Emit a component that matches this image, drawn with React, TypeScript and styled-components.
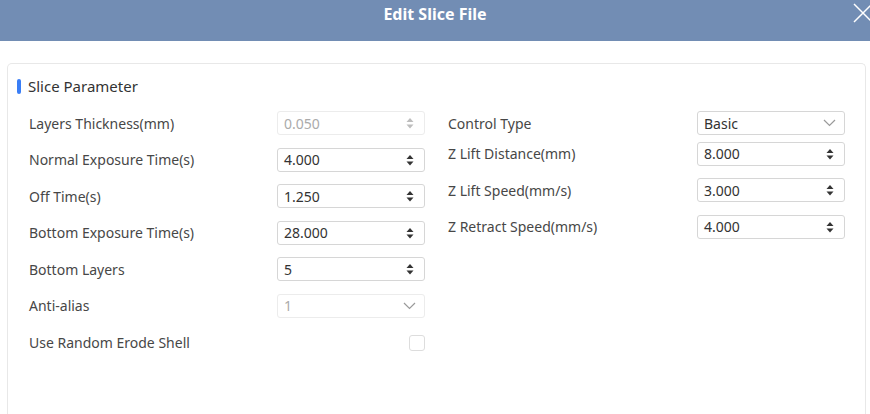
import React, { useState } from "react";
import styled, { createGlobalStyle } from "styled-components";

const GlobalStyle = createGlobalStyle`
  body {
    margin: 0;
    background: #ffffff;
    font-family: "Noto Sans", "Liberation Sans", sans-serif;
  }
`;

interface IField {
  label: string;
  kind: "number" | "select" | "check";
  value?: string;
  disabled?: boolean;
  tight?: boolean;
}

const leftFields: IField[] = [
  { label: "Layers Thickness(mm)", kind: "number", value: "0.050", disabled: true },
  { label: "Normal Exposure Time(s)", kind: "number", value: "4.000" },
  { label: "Off Time(s)", kind: "number", value: "1.250" },
  { label: "Bottom Exposure Time(s)", kind: "number", value: "28.000" },
  { label: "Bottom Layers", kind: "number", value: "5" },
  { label: "Anti-alias", kind: "select", value: "1", disabled: true },
  { label: "Use Random Erode Shell", kind: "check" },
];

const rightFields: IField[] = [
  { label: "Control Type", kind: "select", value: "Basic", tight: true },
  { label: "Z Lift Distance(mm)", kind: "number", value: "8.000" },
  { label: "Z Lift Speed(mm/s)", kind: "number", value: "3.000" },
  { label: "Z Retract Speed(mm/s)", kind: "number", value: "4.000" },
];

const Spinner = ({ disabled }: { disabled?: boolean }) => (
  <SpinBox>
    <svg width="8" height="16" viewBox="0 0 8 16">
      <path d="M4 3 L7.5 7 L0.5 7 Z" fill={disabled ? "#bdbdbd" : "#333"} />
      <path d="M0.5 9.5 L7.5 9.5 L4 13.5 Z" fill={disabled ? "#bdbdbd" : "#333"} />
    </svg>
  </SpinBox>
);

const Chevron = () => (
  <svg width="13" height="8" viewBox="0 0 13 8">
    <path d="M1 1 L6.5 6.5 L12 1" fill="none" stroke="#9a9a9a" strokeWidth="1.2" />
  </svg>
);

const FieldRow = ({ field }: { field: IField }) => {
  const [checked, setChecked] = useState(false);

  return (
    <Row $tight={field.tight}>
      <Label>{field.label}</Label>
      {field.kind === "number" && (
        <Box $disabled={field.disabled}>
          <Value $disabled={field.disabled}>{field.value}</Value>
          <Spinner disabled={field.disabled} />
        </Box>
      )}
      {field.kind === "select" && (
        <Box $disabled={field.disabled}>
          <Value $disabled={field.disabled}>{field.value}</Value>
          <Chevron />
        </Box>
      )}
      {field.kind === "check" && (
        <CheckWrap>
          <Check $checked={checked} onClick={() => setChecked(!checked)} />
        </CheckWrap>
      )}
    </Row>
  );
};

const App = () => {
  return (
    <>
      <GlobalStyle />
      <Page>
        <Header>
          <HeaderTitle>Edit Slice File</HeaderTitle>
          <Close aria-label="close">
            <svg width="22" height="22" viewBox="0 0 22 22">
              <path d="M2 2 L20 20 M20 2 L2 20" stroke="#ffffff" strokeWidth="1.5" />
            </svg>
          </Close>
        </Header>
        <Card>
          <SectionTitle>
            <Bar />
            Slice Parameter
          </SectionTitle>
          <Columns>
            <Column>
              {leftFields.map((f) => (
                <FieldRow key={f.label} field={f} />
              ))}
            </Column>
            <Column>
              {rightFields.map((f) => (
                <FieldRow key={f.label} field={f} />
              ))}
            </Column>
          </Columns>
        </Card>
      </Page>
    </>
  );
};

export default App;

const Page = styled.div`
  width: 870px;
  height: 414px;
  overflow: hidden;
  display: flex;
  flex-direction: column;
`;

const Header = styled.div`
  position: relative;
  height: 41px;
  flex-shrink: 0;
  background: #728db4;
  display: flex;
  align-items: center;
  justify-content: center;
`;

const HeaderTitle = styled.div`
  color: #ffffff;
  font-size: 16px;
  font-weight: 700;
  margin-top: -13px;
`;

const Close = styled.button`
  position: absolute;
  right: -4px;
  top: 2px;
  padding: 0;
  border: none;
  background: none;
  cursor: pointer;
`;

const Card = styled.div`
  margin: 22px 4px 0 7px;
  flex: 1;
  border: 1px solid #e8e8e8;
  border-bottom: none;
  border-radius: 5px 5px 0 0;
  padding: 10px 20px 0 9px;
`;

const SectionTitle = styled.div`
  display: flex;
  align-items: center;
  gap: 7px;
  height: 24px;
  font-size: 15px;
  color: #333333;
`;

const Bar = styled.span`
  width: 4px;
  height: 15px;
  border-radius: 2px;
  background: #3a7ef6;
`;

const Columns = styled.div`
  margin-top: 13px;
  padding-left: 12px;
  display: grid;
  grid-template-columns: 396px 397px;
  column-gap: 23px;
  align-items: start;
`;

const Column = styled.div`
  display: flex;
  flex-direction: column;
  gap: 12.6px;
`;

const Row = styled.div<{ $tight?: boolean }>`
  height: 24px;
  display: flex;
  align-items: center;
  justify-content: space-between;
  margin-bottom: ${(p) => (p.$tight ? "-6px" : "0")};
`;

const Label = styled.span`
  font-size: 14px;
  color: #474747;
`;

const Box = styled.div<{ $disabled?: boolean }>`
  width: 148px;
  height: 24px;
  box-sizing: border-box;
  border: 1px solid ${(p) => (p.$disabled ? "#ececec" : "#d6d6d6")};
  border-radius: 3px;
  display: flex;
  align-items: center;
  justify-content: space-between;
  padding: 0 8px 0 6px;
  background: #ffffff;
`;

const Value = styled.span<{ $disabled?: boolean }>`
  font-size: 14px;
  color: ${(p) => (p.$disabled ? "#ababab" : "#333333")};
`;

const SpinBox = styled.span`
  display: flex;
  align-items: center;
  margin-right: 2px;
`;

const CheckWrap = styled.div`
  width: 148px;
  display: flex;
  justify-content: flex-end;
`;

const Check = styled.span<{ $checked: boolean }>`
  width: 16px;
  height: 16px;
  box-sizing: border-box;
  border: 1px solid #dddddd;
  border-radius: 3px;
  background: ${(p) => (p.$checked ? "#3a7ef6" : "#ffffff")};
  cursor: pointer;
`;
